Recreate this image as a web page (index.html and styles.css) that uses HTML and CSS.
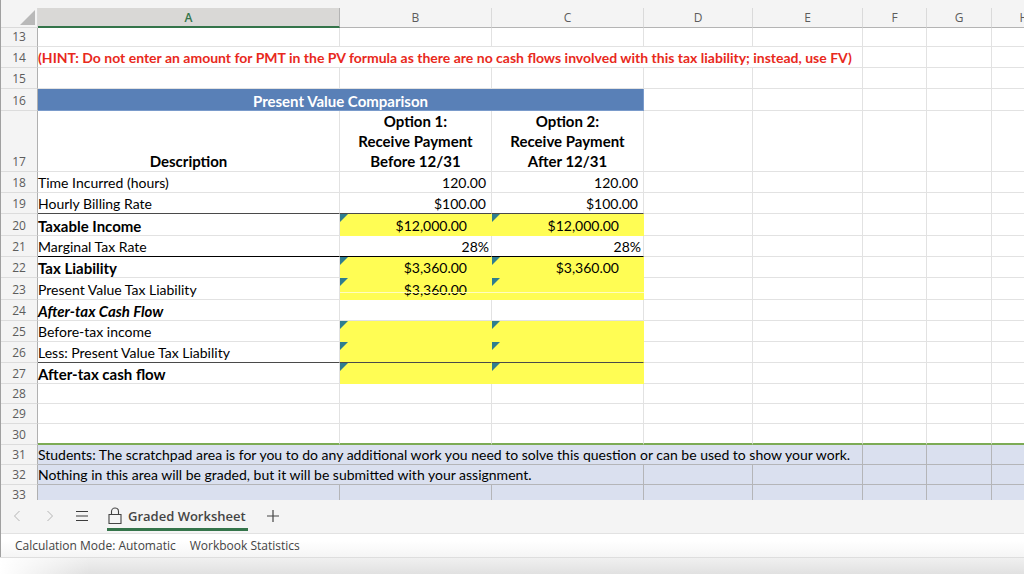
FILE: index.html
```
<!DOCTYPE html>
<html lang="en">
<head>
<meta charset="utf-8">
<title>Graded Worksheet</title>
<link rel="stylesheet" href="styles.css">
</head>
<body>
<div class="app">
<main class="sheet">
<table class="grid">
<colgroup><col class="w-head"><col class="w-a"><col class="w-b"><col class="w-b"><col class="w-d"><col class="w-e"><col class="w-g"><col class="w-f"><col class="w-f"></colgroup>
<thead>
<tr><td class="corner"><svg width="15" height="15" viewBox="0 0 15 15" aria-hidden="true"><path d="M15 0V15H0Z" fill="#b9b9b9"/></svg></td><th scope="col" class="selected">A</th><th scope="col">B</th><th scope="col">C</th><th scope="col">D</th><th scope="col">E</th><th scope="col">F</th><th scope="col">G</th><th scope="col">H</th></tr>
</thead>
<tbody>
<tr class="h19"><th scope="row">13</th><td></td><td></td><td></td><td></td><td></td><td></td><td></td><td></td></tr>
<tr class="h21"><th scope="row">14</th><td colspan="5" class="hint">(HINT: Do not enter an amount for PMT in the PV formula as there are no cash flows involved with this tax liability; instead, use FV)</td><td></td><td></td><td></td></tr>
<tr class="h21"><th scope="row">15</th><td></td><td></td><td></td><td></td><td></td><td></td><td></td><td></td></tr>
<tr class="h22"><th scope="row">16</th><td colspan="3" class="banner">Present Value Comparison</td><td></td><td></td><td></td><td></td><td></td></tr>
<tr class="h61"><th scope="row">17</th><td class="heading">Description</td><td class="heading">Option 1:<br>Receive Payment<br>Before 12/31</td><td class="heading">Option 2:<br>Receive Payment<br>After 12/31</td><td></td><td></td><td></td><td></td><td></td></tr>
<tr class="h21"><th scope="row">18</th><td>Time Incurred (hours)</td><td class="num">120.00</td><td class="num">120.00</td><td></td><td></td><td></td><td></td><td></td></tr>
<tr class="h21 rule"><th scope="row">19</th><td>Hourly Billing Rate</td><td class="num">$100.00</td><td class="num">$100.00</td><td></td><td></td><td></td><td></td><td></td></tr>
<tr class="h22"><th scope="row">20</th><td class="bold">Taxable Income</td><td class="answer">$12,000.00</td><td class="answer">$12,000.00</td><td></td><td></td><td></td><td></td><td></td></tr>
<tr class="h21 rule dark"><th scope="row">21</th><td>Marginal Tax Rate</td><td class="num pct">28%</td><td class="num pct">28%</td><td></td><td></td><td></td><td></td><td></td></tr>
<tr class="h21"><th scope="row">22</th><td class="bold">Tax Liability</td><td class="answer">$3,360.00</td><td class="answer">$3,360.00</td><td></td><td></td><td></td><td></td><td></td></tr>
<tr class="h22"><th scope="row">23</th><td>Present Value Tax Liability</td><td class="answer split">$3,360.00</td><td class="answer split"></td><td></td><td></td><td></td><td></td><td></td></tr>
<tr class="h21"><th scope="row">24</th><td class="bold italic">After-tax Cash Flow</td><td></td><td></td><td></td><td></td><td></td><td></td><td></td></tr>
<tr class="h21"><th scope="row">25</th><td>Before-tax income</td><td class="answer"></td><td class="answer"></td><td></td><td></td><td></td><td></td><td></td></tr>
<tr class="h21 rule"><th scope="row">26</th><td>Less: Present Value Tax Liability</td><td class="answer"></td><td class="answer"></td><td></td><td></td><td></td><td></td><td></td></tr>
<tr class="h21"><th scope="row">27</th><td class="bold">After-tax cash flow</td><td class="answer"></td><td class="answer"></td><td></td><td></td><td></td><td></td><td></td></tr>
<tr class="h20"><th scope="row">28</th><td></td><td></td><td></td><td></td><td></td><td></td><td></td><td></td></tr>
<tr class="h20"><th scope="row">29</th><td></td><td></td><td></td><td></td><td></td><td></td><td></td><td></td></tr>
<tr class="h21 green"><th scope="row">30</th><td></td><td></td><td></td><td></td><td></td><td></td><td></td><td></td></tr>
<tr class="h20 scratch"><th scope="row">31</th><td colspan="5">Students: The scratchpad area is for you to do any additional work you need to solve this question or can be used to show your work.</td><td></td><td></td><td></td></tr>
<tr class="h20 scratch"><th scope="row">32</th><td colspan="3">Nothing in this area will be graded, but it will be submitted with your assignment.</td><td></td><td></td><td></td><td></td><td></td></tr>
<tr class="h20 scratch"><th scope="row">33</th><td></td><td></td><td></td><td></td><td></td><td></td><td></td><td></td></tr>
</tbody>
</table>
</main>
<nav class="tabs" aria-label="Sheets">
<button class="icon prev" aria-label="Previous sheet"><svg width="8" height="12" viewBox="0 0 8 12"><path d="M6.500 1L1.500 6L6.500 11" fill="none" stroke="#b5b5b5"/></svg></button>
<button class="icon next" aria-label="Next sheet"><svg width="8" height="12" viewBox="0 0 8 12"><path d="M1.500 1L6.500 6L1.500 11" fill="none" stroke="#b5b5b5"/></svg></button>
<button class="icon all" aria-label="All sheets"><svg width="14" height="12" viewBox="0 0 14 12"><path d="M1 1.500H13M1 6H13M1 10.500H13" fill="none" stroke="#3c3c3c" stroke-width="1.200"/></svg></button>
<button class="tab"><svg width="14" height="18" viewBox="0 0 14 18" aria-hidden="true"><path d="M1 7.500H13V16.500H1ZM3.500 7.500V4.500A3.500 3.500 0 0 1 10.500 4.500V7.500" fill="none" stroke="#444" stroke-width="1.100"/></svg><span>Graded Worksheet</span></button>
<button class="icon add" aria-label="Add sheet"><svg width="12" height="12" viewBox="0 0 12 12"><path d="M6 0V12M0 6H12" fill="none" stroke="#444" stroke-width="1.200"/></svg></button>
</nav>
<footer class="status"><button>Calculation Mode: Automatic</button><button>Workbook Statistics</button></footer>
</div>
<div class="shade"></div>
</body>
</html>
```
FILE: styles.css
```
* { box-sizing: border-box; }
body {
  margin: 0;
  height: 100vh;
  display: flex;
  flex-direction: column;
  overflow: hidden;
  background: #fff;
  font-family: "Open Sans", "Noto Sans", sans-serif;
}
.app {
  flex: 1;
  min-height: 0;
  display: flex;
  flex-direction: column;
  border-left: 1px solid #a0a0a0;
}
.sheet {
  flex: 1;
  min-height: 0;
  overflow: hidden;
  padding-top: 8px;
  background: #f4f4f4;
}
.grid {
  table-layout: fixed;
  width: 1056px;
  border-collapse: separate;
  border-spacing: 0;
  background: #fff;
  font: 14px/18px Lato, sans-serif;
  color: #000;
}
.w-head { width: 37px; }
.w-a { width: 302px; }
.w-b { width: 152px; }
.w-d { width: 109px; }
.w-e { width: 110px; }
.w-f { width: 65px; }
.w-g { width: 64px; }
th, td { padding: 0; }
th {
  font: 12px/18px "Open Sans", "Noto Sans", sans-serif;
  color: #5c5c5c;
  background: #f4f4f4;
}
thead th, .corner {
  height: 20px;
  border-right: 1px solid #dadada;
  border-bottom: 1px solid #b4b4b4;
}
.corner {
  background: #f4f4f4;
  border-bottom-color: #dadada;
  padding-right: 2px;
}
.corner svg { display: block; margin-left: auto; }
thead .selected {
  background: #d9d8d6;
  color: #34744a;
  font-weight: 600;
  line-height: 17px;
  border-bottom: 2px solid #34744a;
  border-right-color: #b4b4b4;
}
tbody th {
  vertical-align: bottom;
  border-right: 1px solid #b0b0b0;
  border-bottom: 1px solid #dcdcdc;
}
tbody td {
  vertical-align: bottom;
  white-space: nowrap;
  border-right: 1px solid #e2e2e2;
  border-bottom: 1px solid #e2e2e2;
}
.h19 { height: 19px; }
.h20 { height: 20px; }
.h21 { height: 21px; }
.h22 { height: 22px; }
.h61 { height: 61px; }
.bold, .heading, .banner { font-size: 15px; font-weight: 700; }
.italic { font-style: italic; }
.hint { color: #e8291c; font-weight: 700; }
.banner {
  background: #5980b7;
  border-color: #7a9bcb;
  color: #fff;
  text-align: center;
}
.heading { text-align: center; line-height: 20px; }
.num { text-align: right; padding-right: 5px; }
.pct { padding-right: 2px; }
.rule td:nth-child(-n+4) { border-bottom-color: #4a4a4a; }
.dark td:nth-child(-n+4) { border-bottom-color: #000; }
.answer {
  position: relative;
  background: #fffd54;
  border-color: #fffd54;
  text-align: right;
  padding-right: 24px;
}
.answer::before {
  content: "";
  position: absolute;
  left: 0;
  top: 0;
  width: 8px;
  height: 8px;
  background: #2f7d8f;
  clip-path: polygon(0 0, 100% 0, 0 100%);
}
.split::after {
  content: "";
  position: absolute;
  left: 0;
  right: -1px;
  bottom: 6px;
  height: 1px;
  background: #fffdc0;
}
.green td { border-bottom: 2px solid #7cab55; }
.scratch td {
  background: #dae0ef;
  border-color: #b4b5b8;
}
button {
  border: 0;
  padding: 0;
  background: none;
  font: inherit;
  color: inherit;
}
.tabs {
  height: 34px;
  display: flex;
  align-items: center;
  padding: 0 0 2px 12px;
  background: #f4f4f4;
  border-bottom: 1px solid #e2e2e2;
  color: #444;
}
.icon { display: flex; }
.next { margin-left: 25px; }
.all { margin-left: 21px; }
.tab {
  align-self: stretch;
  display: flex;
  align-items: center;
  gap: 6px;
  margin-left: 18px;
  padding: 3px 2px 0 1px;
  border-bottom: 3px solid #34744a;
  font-size: 13px;
  font-weight: 600;
}
.add { margin-left: 19px; }
.status {
  height: 23px;
  display: flex;
  align-items: center;
  gap: 14px;
  padding: 0 14px;
  background: linear-gradient(#fff, #fff 30%, #f5f5f5);
  font-size: 12px;
  color: #444;
}
.shade {
  height: 17px;
  border-top: 1px solid #dedede;
  background: linear-gradient(90deg, #fff, rgba(255, 255, 255, 0) 90px), linear-gradient(#f0f0f0, #e1e1e1);
}
```
